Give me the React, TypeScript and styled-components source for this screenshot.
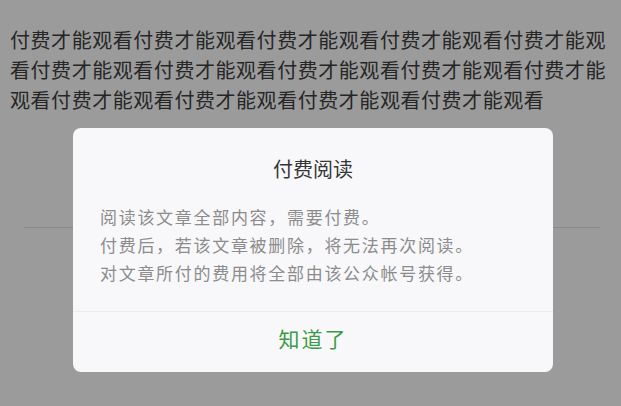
import React from "react";
import styled, { createGlobalStyle } from "styled-components";

const Global = createGlobalStyle`
  html, body {
    margin: 0;
    padding: 0;
    background: #9b9b9b;
  }
  body {
    font-family: "Noto Sans CJK SC", "Noto Sans", sans-serif;
  }
`;

const Page = styled.div`
  width: 621px;
  height: 406px;
  overflow: hidden;
  position: relative;
  background: #9b9b9b;
`;

const Article = styled.p`
  margin: 0;
  padding: 25px 8px 0 10px;
  font-size: 20px;
  letter-spacing: 0.55px;
  line-height: 30px;
  color: #262626;
  word-break: break-all;
`;

const Rule = styled.div`
  height: 1px;
  background: #8a8a8a;
  margin: 112px 21px 0 24px;
`;

const Mask = styled.div`
  position: absolute;
  inset: 0;
  display: flex;
  justify-content: center;
  align-items: flex-start;
  padding: 128px 0 0 5px;
  box-sizing: border-box;
`;

const Dialog = styled.div`
  width: 480px;
  background: #f8f8fb;
  border-radius: 8px;
  overflow: hidden;
  display: flex;
  flex-direction: column;
`;

const Title = styled.div`
  padding-top: 27px;
  text-align: center;
  font-size: 20px;
  line-height: 28px;
  color: #353535;
`;

const Body = styled.div`
  padding: 20px 27px 24px;
  font-size: 17px;
  letter-spacing: 1.7px;
  line-height: 28px;
  color: #8c8c8c;
`;

const Line = styled.div``;

const Button = styled.div`
  height: 61px;
  box-sizing: border-box;
  padding-bottom: 8px;
  border-top: 1px solid #ececef;
  display: flex;
  align-items: center;
  justify-content: center;
  font-size: 21px;
  letter-spacing: 2px;
  color: #3a9c47;
`;

const App: React.FC = () => {
  const text = "付费才能观看".repeat(14).slice(0, 84);
  return (
    <Page>
      <Global />
      <Article>{text}</Article>
      <Rule />
      <Mask>
        <Dialog>
          <Title>付费阅读</Title>
          <Body>
            <Line>阅读该文章全部内容，需要付费。</Line>
            <Line>付费后，若该文章被删除，将无法再次阅读。</Line>
            <Line>对文章所付的费用将全部由该公众帐号获得。</Line>
          </Body>
          <Button>知道了</Button>
        </Dialog>
      </Mask>
    </Page>
  );
};

export default App;
